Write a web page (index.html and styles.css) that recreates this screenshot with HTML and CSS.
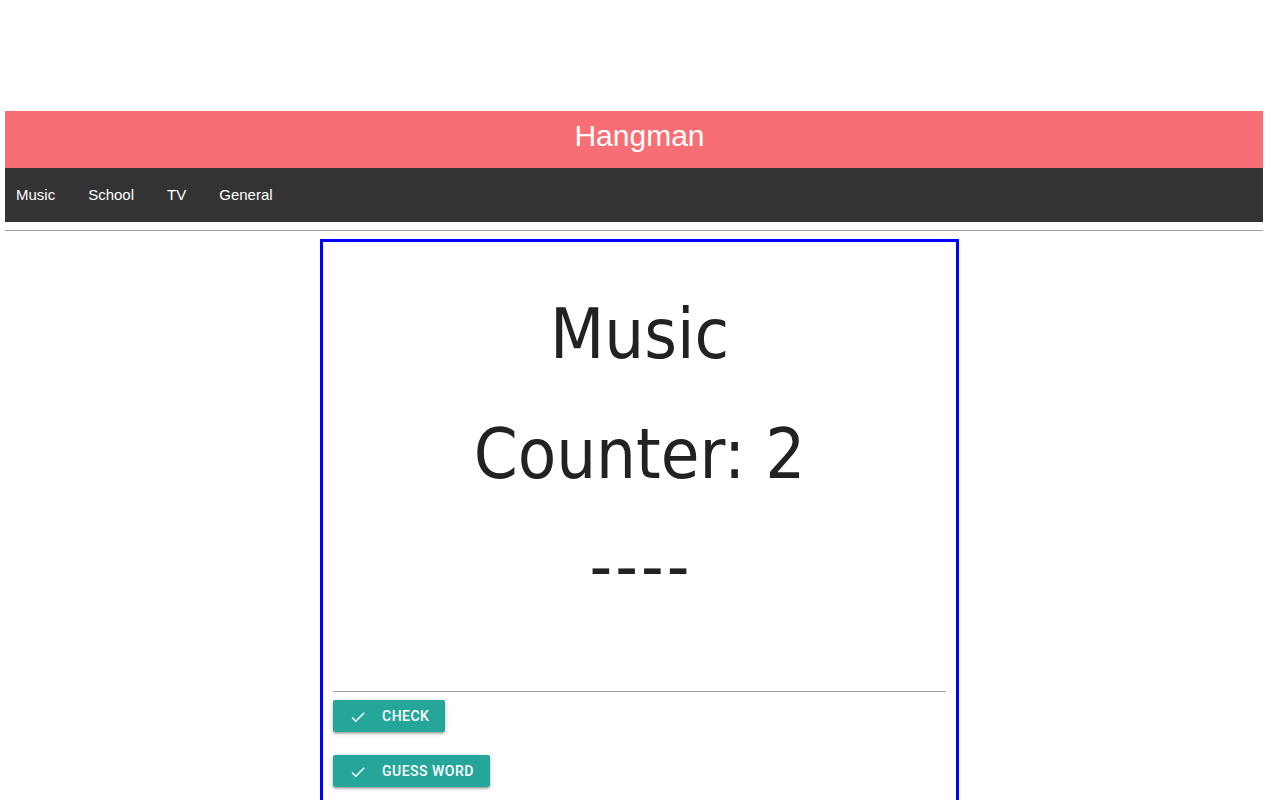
FILE: index.html
```html
<!DOCTYPE html>
<html lang="en">
<head>
<meta charset="utf-8">
<title>Hangman</title>
<link rel="stylesheet" href="styles.css">
</head>
<body>
<div class="page">
  <header class="title-bar">Hangman</header>
  <nav class="nav">
    <a class="nav-link" href="#">Music</a>
    <a class="nav-link" href="#">School</a>
    <a class="nav-link" href="#">TV</a>
    <a class="nav-link" href="#">General</a>
  </nav>
  <hr class="rule">
  <main class="game">
    <div class="game-text">
      <div class="line">Music</div>
      <div class="line">Counter: 2</div>
      <div class="line word">----</div>
    </div>
    <hr class="inner-rule">
    <div class="actions">
      <button class="btn" type="button">
        <svg class="btn-icon" viewBox="0 0 24 24" width="18" height="18"><path fill="#fff" d="M9 16.17L4.83 12l-1.42 1.41L9 19 21 7l-1.41-1.41z"/></svg>
        <span>Check</span>
      </button>
      <button class="btn" type="button">
        <svg class="btn-icon" viewBox="0 0 24 24" width="18" height="18"><path fill="#fff" d="M9 16.17L4.83 12l-1.42 1.41L9 19 21 7l-1.41-1.41z"/></svg>
        <span>Guess word</span>
      </button>
    </div>
  </main>
</div>
</body>
</html>
```

FILE: styles.css
```css
html, body {
  margin: 0;
  padding: 0;
  background: #fff;
}

body {
  font-family: "Liberation Sans", Arial, sans-serif;
  color: rgba(0, 0, 0, 0.87);
}

.page {
  padding-top: 111px;
}

.title-bar {
  margin: 0 17px 0 5px;
  background: #f76f74;
  color: #fff;
  font-size: 30px;
  line-height: 50px;
  padding: 0 0 7px 11px;
  text-align: center;
}

.nav {
  margin: 0 17px 0 5px;
  background: #333333;
  height: 54px;
  display: flex;
  align-items: center;
  gap: 33px;
  padding-left: 11px;
}

.nav-link {
  color: #fff;
  text-decoration: none;
  font-size: 15px;
  line-height: 54px;
}

.rule {
  margin: 8px 17px 0 5px;
  border: 0;
  border-top: 1px solid #a0a0a0;
  height: 0;
}

.game {
  box-sizing: border-box;
  width: 639px;
  margin: 8px 0 0 320px;
  border: 3px solid #0000ff;
  padding: 0 10px 40px;
}

.game-text {
  padding-top: 32px;
  text-align: center;
  font-family: "DejaVu Sans Condensed", "DejaVu Sans", sans-serif;
  font-stretch: condensed;
  font-size: 70px;
  line-height: 120px;
  color: #222;
}

.word {
  line-height: 104px;
  letter-spacing: 3px;
  padding-left: 3px;
}

.inner-rule {
  margin: 73px 0 0;
  border: 0;
  border-top: 1px solid #9e9e9e;
  height: 0;
}

.actions {
  display: flex;
  flex-direction: column;
  align-items: flex-start;
  gap: 23px;
  padding-top: 8px;
}

.btn {
  display: inline-flex;
  align-items: center;
  height: 32px;
  padding: 0 16px;
  border: 0;
  border-radius: 2px;
  background: #26a69a;
  color: #fff;
  font-family: Roboto, "Liberation Sans", sans-serif;
  font-weight: 500;
  font-size: 14px;
  letter-spacing: 0.5px;
  text-transform: uppercase;
  box-shadow: 0 2px 2px 0 rgba(0,0,0,0.14), 0 3px 1px -2px rgba(0,0,0,0.12), 0 1px 5px 0 rgba(0,0,0,0.2);
  cursor: pointer;
}

.btn-icon {
  display: block;
  margin-right: 15px;
  margin-top: 2px;
}
```
